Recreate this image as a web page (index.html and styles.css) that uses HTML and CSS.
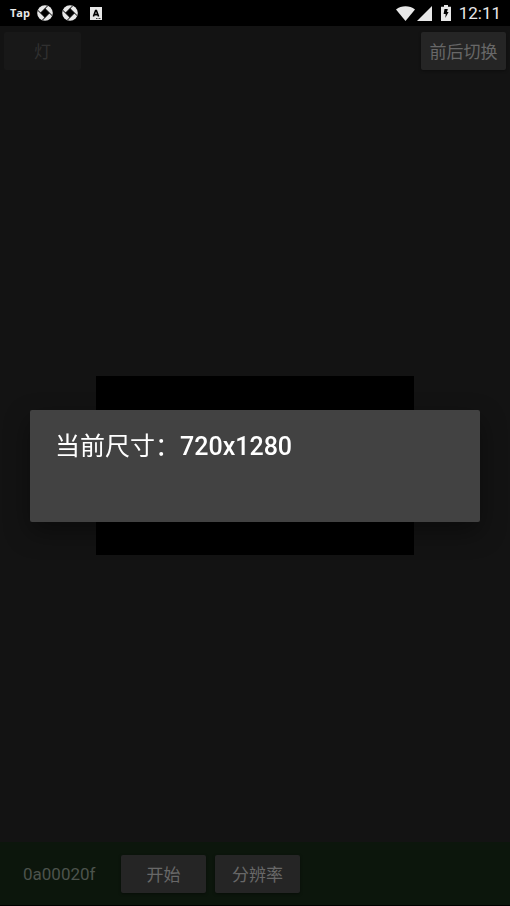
FILE: index.html
```
<!DOCTYPE html>
<html lang="zh-CN">
<head>
    <meta charset="UTF-8">
    <meta name="viewport" content="width=device-width, initial-scale=1.0">
    <title>分辨率</title>
    <link rel="stylesheet" href="styles.css">
</head>
<body>
    <header class="status-bar">
        <div class="status-left">
            <span class="tap-logo">Tap</span>
            <svg class="shutter" viewBox="0 0 16 16">
                <circle cx="8" cy="8" r="7.8" fill="#e8e8e8"/>
                <path d="M8 3.600 12.400 8 8 12.400 3.600 8z" fill="#000"/>
                <path d="M3.600 8 10.500 1M8 3.600 15 10.500M12.400 8 5.500 15M8 12.400 1 5.500" stroke="#000" stroke-width="1" fill="none"/>
            </svg>
            <svg class="shutter" viewBox="0 0 16 16">
                <circle cx="8" cy="8" r="7.8" fill="#e8e8e8"/>
                <path d="M8 3.600 12.400 8 8 12.400 3.600 8z" fill="#000"/>
                <path d="M3.600 8 10.500 1M8 3.600 15 10.500M12.400 8 5.500 15M8 12.400 1 5.500" stroke="#000" stroke-width="1" fill="none"/>
            </svg>
            <svg class="input-icon" viewBox="0 0 12 13">
                <path d="M0 0h12v13H0z" fill="#e8e8e8"/>
                <path d="M3.400 9.500 5.600 3.500h.8l2.200 6M4.300 7.600h3.400" stroke="#000" stroke-width="1.600" fill="none"/>
                <path d="M6 11.500h1.500M8.500 11.500H10.500" stroke="#444" stroke-width="1"/>
            </svg>
        </div>
        <div class="status-right">
            <svg class="wifi" viewBox="0 0 19 15">
                <path d="M9.500 15 0 3.500C5.200-.9 13.800-.9 19 3.500z" fill="#e8e8e8"/>
            </svg>
            <svg class="signal" viewBox="0 0 15 15">
                <path d="M15 0v15H0z" fill="#e8e8e8"/>
            </svg>
            <svg class="battery" viewBox="0 0 10 16">
                <path d="M3 0h4v1.700h3V16H0V1.700h3z" fill="#e8e8e8"/>
                <path d="M3.500 4h3.300L6 7h1.600L4.300 13l.4-4H2.600z" fill="#000"/>
            </svg>
            <span class="clock">12:11</span>
        </div>
    </header>

    <main class="camera">
        <div class="top-bar">
            <button class="btn btn-light" type="button" disabled>灯</button>
            <button class="btn" type="button">前后切换</button>
        </div>
        <div class="stage">
            <div class="preview"></div>
        </div>
        <div class="bottom-bar">
            <span class="code">0a00020f</span>
            <button class="btn" type="button">开始</button>
            <button class="btn" type="button">分辨率</button>
        </div>
    </main>

    <div class="overlay">
        <div class="dialog" role="dialog" aria-labelledby="dialog-title">
            <h1 class="dialog-title" id="dialog-title">当前尺寸：<span class="size">720x1280</span></h1>
        </div>
    </div>
</body>
</html>
```
FILE: styles.css
```
* {
    margin: 0;
    padding: 0;
    box-sizing: border-box;
}

body {
    min-height: 100vh;
    display: flex;
    flex-direction: column;
    background: #131313;
    font-family: Roboto, "Noto Sans CJK SC", sans-serif;
}

.status-bar {
    height: 26px;
    padding: 0 9px 0 10px;
    display: flex;
    justify-content: space-between;
    align-items: center;
    background: #000;
    color: #e8e8e8;
}

.status-left,
.status-right {
    display: flex;
    align-items: center;
}

.status-left {
    gap: 9px;
}

.status-right {
    height: 24px;
    gap: 2px;
}

.tap-logo {
    width: 18px;
    font-family: "Open Sans", sans-serif;
    font-size: 11px;
    font-weight: 700;
    line-height: 24px;
}

.shutter {
    width: 16px;
    height: 16px;
}

.input-icon {
    width: 12px;
    height: 13px;
    margin-left: 3px;
}

.wifi {
    width: 19px;
    height: 15px;
}

.signal {
    width: 15px;
    height: 15px;
}

.battery {
    width: 10px;
    height: 16px;
    margin: 0 6px 0 7px;
}

.clock {
    font-size: 17px;
    line-height: 26px;
}

.camera {
    flex: 1;
    display: flex;
    flex-direction: column;
    border-bottom: 1px solid #000;
}

.top-bar {
    height: 63px;
    padding: 6px 4px;
    display: flex;
    justify-content: space-between;
    align-items: flex-start;
}

.btn {
    min-width: 85px;
    height: 38px;
    padding: 2px 6px 0;
    border: none;
    border-radius: 2px;
    background: #252525;
    box-shadow: 0 1px 3px rgba(0, 0, 0, 0.4);
    color: #686868;
    font-family: inherit;
    font-size: 17px;
    line-height: 36px;
}

.btn-light {
    min-width: 77px;
    background: #181818;
    box-shadow: none;
    color: #303030;
}

.stage {
    flex: 1;
    display: flex;
    justify-content: center;
    align-items: center;
}

.preview {
    width: 62.5%;
    aspect-ratio: 16 / 9;
    background: #000;
}

.bottom-bar {
    height: 63px;
    padding: 0 23px;
    display: flex;
    align-items: center;
    gap: 9px;
    background: #0c160c;
}

.code {
    width: 89px;
    color: #4c534c;
    font-size: 17px;
}

.overlay {
    position: fixed;
    inset: 26px 0 0;
    padding: 0 30px;
    display: flex;
    align-items: center;
}

.dialog {
    width: 100%;
    min-height: 112px;
    padding: 19px 25px;
    border-radius: 2px;
    background: #424242;
    box-shadow: 0 10px 26px rgba(0, 0, 0, 0.4);
}

.dialog-title {
    color: #fff;
    font-size: 25px;
    font-weight: 400;
    line-height: 36px;
}

.size {
    font-weight: 500;
}
```
